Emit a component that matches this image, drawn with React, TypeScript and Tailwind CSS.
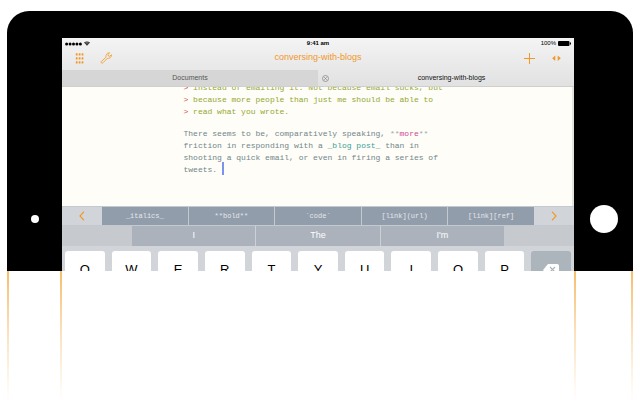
import React from "react";

const shortcuts = ["_italics_", "**bold**", "`code`", "[link](url)", "[link][ref]"];
const suggestions = ["I", "The", "I'm"];
const keys = ["Q", "W", "E", "R", "T", "Y", "U", "I", "O", "P"];

function GridIcon() {
  return (
    <svg width="9" height="11" viewBox="0 0 9 11" fill="#f0982a">
      {[0.8, 3.7, 6.6].map((x) =>
        [0, 4, 8].map((y) => <rect key={`${x}-${y}`} x={x} y={y + 0.3} width="1.8" height="2.2" rx="0.5" />)
      )}
    </svg>
  );
}

function WrenchIcon() {
  return (
    <svg width="12" height="12" viewBox="0 0 24 24" fill="none" stroke="#f0a23c" strokeWidth="1.8" strokeLinejoin="round">
      <path d="M2.500 19 12 10.500C11 6 14 1.500 19 1.500L16 5 16.800 8 19.500 8.500 23 5.500C23.500 10.500 18.500 13.800 14.500 12.800L6 21.500C4 23.500.5 21 2.500 19Z" />
    </svg>
  );
}

function Chevron({ left }: { left?: boolean }) {
  return (
    <svg width="6" height="10" viewBox="0 0 6 10" fill="none" stroke="#f0982a" strokeWidth="1.2">
      <path d={left ? "M5 .7 1 5l4 4.300" : "M1 .7 5 5 1 9.300"} />
    </svg>
  );
}

function StatusBar() {
  return (
    <div className="grid h-[11px] grid-cols-3 items-center px-[3px] text-[6px] leading-[11px] text-black">
      <div className="flex items-center gap-[2px]">
        <svg width="17" height="4" viewBox="0 0 17 4">
          {[0, 1, 2, 3, 4].map((i) => (
            <circle key={i} cx={1.6 + i * 3.45} cy="2" r="1.5" />
          ))}
        </svg>
        <svg width="6" height="5" viewBox="0 0 12 9">
          <path d="M6 9 0 2.500Q6-2 12 2.500Z" fill="#222" />
          <path d="M1 4Q6 0 11 4M3 6Q6 3.500 9 6" fill="none" stroke="#eee" strokeWidth=".7" />
        </svg>
      </div>
      <span className="text-center font-bold">9:41 am</span>
      <div className="flex items-center justify-end gap-[2px]">
        <span>100%</span>
        <svg width="13" height="5" viewBox="0 0 13 5">
          <rect width="11.500" height="5" rx="1" />
          <rect x="12" y="1.500" width="1" height="2" />
        </svg>
      </div>
    </div>
  );
}

function NavBar() {
  return (
    <div className="grid h-[21px] grid-cols-3 items-start px-[13px] pt-[3px]">
      <div className="flex items-center gap-[16px]">
        <button aria-label="Files" className="h-[12px]"><GridIcon /></button>
        <button aria-label="Settings" className="h-[12px]"><WrenchIcon /></button>
      </div>
      <h1 className="text-center text-[9px] leading-[11px] whitespace-nowrap text-[#f0982a]">conversing-with-blogs</h1>
      <div className="flex items-center justify-end gap-[17px]">
        <button aria-label="New document" className="h-[12px]">
          <svg width="11" height="11" viewBox="0 0 11 11" stroke="#f0982a"><path d="M5.500 0v11M0 5.500h11" /></svg>
        </button>
        <button aria-label="Expand" className="h-[12px]">
          <svg width="9" height="11" viewBox="0 0 9 11" fill="#f0982a"><path d="M3.300 2.400v5.600L.2 5.200ZM5.700 2.400v5.600l3.100-2.800Z" /></svg>
        </button>
      </div>
    </div>
  );
}

function Tabs() {
  return (
    <div className="flex h-[17px] border-b border-[#cfcfcf] text-[7px] leading-[16px]">
      <button className="w-1/2 bg-[#d6d6d6] text-center text-[#555]">Documents</button>
      <div className="flex w-1/2 items-center pl-[4px] text-[#111]">
        <button aria-label="Close tab">
          <svg width="7" height="7" viewBox="0 0 14 14" fill="none" stroke="#777" strokeWidth="1.3">
            <circle cx="7" cy="7" r="6" />
            <path d="m4.500 4.500 5 5m0-5-5 5" />
          </svg>
        </button>
        <button className="flex-1 text-center">conversing-with-blogs</button>
      </div>
    </div>
  );
}

function Quote({ children }: { children: string }) {
  return (
    <div>
      <span className="text-[#d0523f]">&gt; </span>
      {children}
    </div>
  );
}

function Editor() {
  return (
    <div className="flex h-[119px] justify-center overflow-hidden border-r-2 border-[#e4e4de] bg-[#fefdf7] font-['Liberation_Mono',monospace] text-[8px] leading-[12px] whitespace-pre">
      <div className="-mt-[5px] w-[267px]">
        <div className="text-[#93a832]">
          <Quote>instead of emailing it. Not because email sucks, but</Quote>
          <Quote>because more people than just me should be able to</Quote>
          <Quote>read what you wrote.</Quote>
        </div>
        <div className="mt-[10px] text-[#71868c]">
          <div>
            There seems to be, comparatively speaking, <span className="text-[#9aa8aa]">**</span>
            <span className="text-[#cf4795]">more</span>
            <span className="text-[#9aa8aa]">**</span>
          </div>
          <div>
            friction in responding with a <span className="text-[#3ba09b]">_blog post_</span> than in
          </div>
          <div>shooting a quick email, or even in firing a series of</div>
          <div className="flex">
            tweets. <span className="-mt-[2px] h-[13px] w-[2px] bg-[#7b93e8]" />
          </div>
        </div>
      </div>
    </div>
  );
}

function Keyboard() {
  return (
    <div className="bg-[#d1d5da]">
      <div className="flex h-[20px] border-y border-[#c3c9d0] font-['Liberation_Mono',monospace] text-[7px] text-[#e3e8ed]">
        <button aria-label="Previous shortcuts" className="flex w-[40px] items-center justify-center"><Chevron left /></button>
        <div className="flex flex-1 divide-x divide-[#c3c9d0] bg-[#929dab]">
          {shortcuts.map((s) => (
            <button key={s} className="flex-1">{s}</button>
          ))}
        </div>
        <button aria-label="Next shortcuts" className="flex w-[40px] items-center justify-center"><Chevron /></button>
      </div>
      <div className="flex h-[20px] bg-[#c6c9ce] px-[70px] text-[9px] text-white">
        <div className="flex flex-1 divide-x divide-[#cdd1d6] bg-[#abb2bb]">
          {suggestions.map((s) => (
            <button key={s} className="flex-1">{s}</button>
          ))}
        </div>
      </div>
      <div className="flex h-[25px] gap-[7px] overflow-hidden px-[3px] pt-[5px]">
        {keys.map((k) => (
          <button key={k} className="h-[38px] flex-1 rounded-[3px] bg-white text-[13px] text-black">{k}</button>
        ))}
        <button aria-label="Delete" className="flex h-[38px] flex-1 items-center justify-center rounded-[3px] bg-[#acb4bc]">
          <svg width="16" height="12" viewBox="0 0 16 12">
            <path d="M5 0h9q2 0 2 2v8q0 2-2 2H5L0 6Z" fill="#fff" />
            <path d="m7 3 5 5m0-5-5 5" stroke="#acb4bc" strokeWidth="1.2" />
          </svg>
        </button>
      </div>
    </div>
  );
}

function Reflection() {
  const line = "w-[2px] bg-linear-to-b from-[#f6bd6d] via-[#fbe3c0] to-white";
  return (
    <div className="flex h-[130px]">
      <div className="flex w-[55px] justify-between">
        <div className={line} />
        <div className={line} />
      </div>
      <div className="flex-1" />
      <div className="flex w-[59px] justify-between">
        <div className={line} />
        <div className={line} />
      </div>
    </div>
  );
}

export default function App() {
  return (
    <main className="min-h-screen bg-white px-[7px] pt-[11px] font-['Liberation_Sans',Arial,sans-serif]">
      <div className="flex rounded-t-[22px] bg-black pt-[27px]">
        <div className="flex w-[55px] items-end justify-center pb-[48px]">
          <div className="size-[8px] rounded-full bg-white" />
        </div>
        <div className="min-w-0 flex-1">
          <div className="bg-linear-to-b from-[#f4f4f4] to-[#e1e1e2]">
            <StatusBar />
            <NavBar />
            <Tabs />
          </div>
          <Editor />
          <Keyboard />
        </div>
        <div className="flex w-[59px] items-end justify-center pb-[38px]">
          <button aria-label="Home" className="size-[28px] rounded-full bg-white" />
        </div>
      </div>
      <Reflection />
    </main>
  );
}
